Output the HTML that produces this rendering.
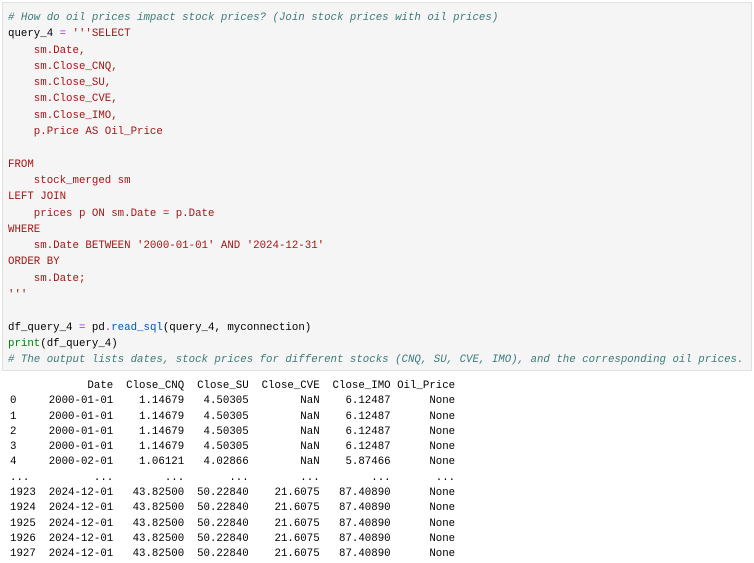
<!DOCTYPE html>
<html><head><style>
body{margin:0;background:#fff;width:754px;height:561px;overflow:hidden}
pre{margin:0;font-family:"Liberation Mono",monospace;font-size:10.75px;white-space:pre}
.cell{position:absolute;left:2px;top:2px;width:748px;height:367px;background:#f5f5f5;border:1px solid #e0e0e0}
.code{position:absolute;left:8px;top:10px;line-height:16.3px;color:#000}
.c{color:#3d7a7a;font-style:italic}
.s{color:#a31515}
.o{color:#aa22ff}
.f{color:#0057ae}
.b{color:#008000}
.out{position:absolute;left:10px;top:379px;line-height:15.3px;color:#000}
</style></head><body>
<div class="cell"></div>
<pre class="code"><span class="c"># How do oil prices impact stock prices? (Join stock prices with oil prices)</span>
query_4 <span class="o">=</span> <span class="s">'''SELECT
    sm.Date,
    sm.Close_CNQ,
    sm.Close_SU,
    sm.Close_CVE,
    sm.Close_IMO,
    p.Price AS Oil_Price

FROM
    stock_merged sm
LEFT JOIN
    prices p ON sm.Date = p.Date
WHERE
    sm.Date BETWEEN '2000-01-01' AND '2024-12-31'
ORDER BY
    sm.Date;
'''</span>

df_query_4 <span class="o">=</span> pd<span class="o">.</span><span class="f">read_sql</span>(query_4, myconnection)
<span class="b">print</span>(df_query_4)
<span class="c"># The output lists dates, stock prices for different stocks (CNQ, SU, CVE, IMO), and the corresponding oil prices.</span></pre>
<pre class="out">            Date  Close_CNQ  Close_SU  Close_CVE  Close_IMO Oil_Price
0     2000-01-01    1.14679   4.50305        NaN    6.12487      None
1     2000-01-01    1.14679   4.50305        NaN    6.12487      None
2     2000-01-01    1.14679   4.50305        NaN    6.12487      None
3     2000-01-01    1.14679   4.50305        NaN    6.12487      None
4     2000-02-01    1.06121   4.02866        NaN    5.87466      None
...          ...        ...       ...        ...        ...       ...
1923  2024-12-01   43.82500  50.22840    21.6075   87.40890      None
1924  2024-12-01   43.82500  50.22840    21.6075   87.40890      None
1925  2024-12-01   43.82500  50.22840    21.6075   87.40890      None
1926  2024-12-01   43.82500  50.22840    21.6075   87.40890      None
1927  2024-12-01   43.82500  50.22840    21.6075   87.40890      None</pre>
</body></html>
